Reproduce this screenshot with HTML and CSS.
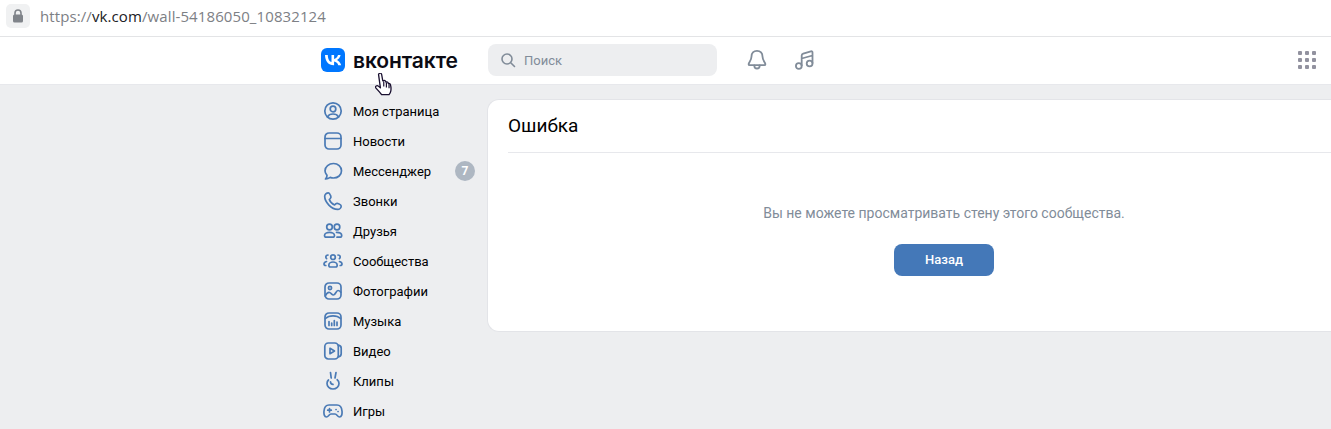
FILE: index.html
```html
<!DOCTYPE html>
<html lang="ru">

<head>
    <meta charset="UTF-8">
    <title>Ошибка</title>
    <link rel="stylesheet" href="styles.css">
</head>

<body>
    <div class="urlbar">
        <div class="lock">
            <svg width="12" height="14" viewBox="0 0 12 14"><path d="M3 6V4a3 3 0 0 1 6 0v2" fill="none" stroke="#80848a" stroke-width="1.6"/><rect x="1" y="5.5" width="10" height="8" rx="1.5" fill="#80848a"/></svg>
        </div>
        <div class="url">https://<b>vk.com</b>/wall-54186050_10832124</div>
    </div>

    <header class="top">
        <div class="top-inner">
            <div class="logo">
                <svg width="24" height="24" viewBox="0 0 24 24"><rect width="24" height="24" rx="6" fill="#07f"/><path d="M12.8 17.2C7.3 17.2 4.2 13.4 4 7h2.8c.1 4.700 2.100 6.700 3.700 7.100V7h2.600v4c1.600-.2 3.300-2 3.900-4h2.600c-.4 2.500-2.300 4.300-3.600 5.100 1.300.6 3.400 2.200 4.200 5.100h-2.900c-.6-1.900-2.200-3.400-4.200-3.600v3.600z" fill="#fff"/></svg>
                <span class="logo-text">вконтакте</span>
            </div>
            <div class="search">
                <svg width="16" height="16" viewBox="0 0 16 16" fill="none" stroke="#818c99" stroke-width="1.6" stroke-linecap="round"><circle cx="7" cy="7" r="5"/><path d="M11 11l3.500 3.500"/></svg>
                <span>Поиск</span>
            </div>
            <div class="top-icon bell">
                <svg width="24" height="24" viewBox="0 0 24 24" fill="none" stroke="#818c99" stroke-width="1.800" stroke-linejoin="round" stroke-linecap="round"><path d="M12 2.800c-3.500 0-5.500 2.500-5.500 5.700 0 4-2.900 6-2.900 7.700 0 .7.500 1 1.200 1h14.400c.7 0 1.200-.3 1.200-1 0-1.700-2.900-3.700-2.900-7.700 0-3.200-2-5.700-5.500-5.700z"/><path d="M9.300 17.400c0 1.900 1.100 3.100 2.700 3.100s2.700-1.200 2.700-3.100"/></svg>
            </div>
            <div class="top-icon">
                <svg width="24" height="24" viewBox="0 0 24 24" fill="none" stroke="#818c99" stroke-width="1.800" stroke-linejoin="round"><circle cx="5.800" cy="18" r="2.900"/><circle cx="16.600" cy="15.500" r="2.900"/><path d="M8.700 18V7.500c0-1 .5-1.600 1.500-1.900l7.700-2.300c1-.2 1.600.3 1.600 1.300v10.900M8.700 10.500l10.800-3"/></svg>
            </div>
            <div class="apps">
                <i></i><i></i><i></i><i></i><i></i><i></i><i></i><i></i><i></i>
            </div>
        </div>
    </header>

    <div class="page">
        <nav class="side">
            <a class="side-item">
                <svg viewBox="0 0 20 20"><circle cx="10" cy="10" r="8.200"/><circle cx="10" cy="8" r="2.800"/><path d="M4.600 15.800c1-2 3-2.800 5.400-2.800s4.400.8 5.400 2.800"/></svg>
                <span>Моя страница</span>
            </a>
            <a class="side-item">
                <svg viewBox="0 0 20 20"><rect x="2" y="2" width="16" height="16" rx="4"/><path d="M2 7.500h16"/></svg>
                <span>Новости</span>
            </a>
            <a class="side-item">
                <svg viewBox="0 0 20 20"><path d="M10.500 2.500c4.500 0 8 3 8 7.300s-3.500 7.200-8 7.200c-1.200 0-2.300-.2-3.300-.6-1 .7-3 1.700-4.700 1.600.8-.9 1.500-2.300 1.500-3.600C2.800 13 2 11.500 2 9.800c0-4.300 4-7.300 8.500-7.300z"/></svg>
                <span>Мессенджер</span>
                <em class="badge">7</em>
            </a>
            <a class="side-item">
                <svg viewBox="0 0 20 20"><path d="M5.500 1.800c1 0 1.700 2 2.300 3.300.4 1 .1 1.700-.5 2.400l-1 1c.8 2.300 2.900 4.500 5.300 5.500l1.100-1.100c.7-.6 1.300-.8 2.200-.4 1.400.7 3.300 1.400 3.300 2.400 0 2-1.800 3.400-3.500 3.400C8.500 18.300 1.700 11.300 1.700 5.300c0-1.800 1.700-3.500 3.800-3.500z"/></svg>
                <span>Звонки</span>
            </a>
            <a class="side-item">
                <svg viewBox="0 0 20 20"><circle cx="6.500" cy="6" r="2.800"/><circle cx="14" cy="6" r="2.800"/><path d="M1.500 14.500c0-2 2.500-3.200 5-3.200s5 1.200 5 3.200c0 1.300-.8 1.700-2 1.700h-6c-1.200 0-2-.4-2-1.700zM13.500 11.300c2.800 0 5.200 1.200 5.200 3.200 0 1.200-.7 1.700-1.900 1.700h-2.800"/></svg>
                <span>Друзья</span>
            </a>
            <a class="side-item">
                <svg viewBox="0 0 20 20"><circle cx="10" cy="6.200" r="2.300"/><path d="M5.800 14.300c0-2 2-3.300 4.200-3.300s4.200 1.300 4.200 3.300c0 1.200-.7 1.700-1.700 1.700H7.500c-1 0-1.700-.5-1.700-1.700zM5 4c-1.400 0-2.200 1-2.200 2.100 0 .7.300 1.200.8 1.600M15 4c1.400 0 2.200 1 2.200 2.100 0 .7-.3 1.200-.8 1.600M3.500 10.500c-1.300.4-2.500 1.300-2.500 2.500 0 1 .7 1.500 1.800 1.500M16.500 10.500c1.300.4 2.500 1.300 2.500 2.500 0 1-.7 1.500-1.800 1.500"/></svg>
                <span>Сообщества</span>
            </a>
            <a class="side-item">
                <svg viewBox="0 0 20 20"><rect x="2" y="2" width="16" height="16" rx="4"/><circle cx="7" cy="7" r="1.600"/><path d="M2.200 15c1.500-2.800 3-3.800 4.300-3.500 1.800.4 2.300 2.500 4 2.500 2 0 2.500-4.500 4.500-4.500 1 0 2 .7 2.800 1.700"/></svg>
                <span>Фотографии</span>
            </a>
            <a class="side-item">
                <svg viewBox="0 0 20 20"><rect x="2" y="2" width="16" height="16" rx="4"/><path d="M2.500 7.500C4.500 5.500 7 4.800 10 4.800s5.500.7 7.500 2.700M6 10.500v4M8.700 12v2.500M11.300 9.500v5M14 11v3.500"/></svg>
                <span>Музыка</span>
            </a>
            <a class="side-item">
                <svg viewBox="0 0 20 20"><rect x="1.800" y="2" width="13.500" height="16" rx="3.500"/><path d="M15.300 4.200c1.800.2 2.900 1.300 2.900 3v5.600c0 1.700-1.100 2.800-2.900 3M7 7.300v5.400l4.500-2.700z"/></svg>
                <span>Видео</span>
            </a>
            <a class="side-item">
                <svg viewBox="0 0 20 20"><path d="M7.500 1.500l.7 5.500M13 1.500L12 7M5.500 9c-1 .9-1.500 2.200-1.500 3.500 0 3 2.600 5.500 6 5.500s6-2.500 6-5.500c0-1.600-.7-3-1.800-3.800M7.500 10.800c0 1.500 1.100 2.600 2.500 2.600"/></svg>
                <span>Клипы</span>
            </a>
            <a class="side-item">
                <svg viewBox="0 0 20 20"><path d="M6 4h8c3 0 4.700 2.500 5 6 .3 3-.3 6-2.500 6-2 0-2.500-3-4.500-3H8c-2 0-2.500 3-4.500 3C1.300 16 .7 13 1 10c.3-3.500 2-6 5-6zM6.500 7.500v3.500M4.700 9.200h3.600M13 8.500h.1M15 10.500h.1"/></svg>
                <span>Игры</span>
            </a>
        </nav>

        <main class="card">
            <h2 class="card-title">Ошибка</h2>
            <div class="card-body">
                <p class="msg">Вы не можете просматривать стену этого сообщества.</p>
                <button class="btn">Назад</button>
            </div>
        </main>
    </div>

    <svg class="cursor" width="18" height="24" viewBox="1.500 1 15 23" preserveAspectRatio="none"><path d="M5 1.500c.8-.6 1.800-.2 2 .7l1 6.300.5-.1.300-.2c.6-.3 1.300 0 1.500.6l.3 1 .3-.2c.7-.2 1.300.1 1.500.8l.2.700c.7-.3 1.500 0 1.700.8.600 2.400.7 4.300.4 6.200-.3 1.800-1 3-1.500 3.600H7c-1-1.500-2.700-3.800-4.700-6.200-.6-.8-.5-1.600.2-2.100.6-.4 1.400-.2 2 .4l1.500 1.500L4.500 2.800c-.1-.5.100-1 .5-1.300z" fill="#fff" stroke="#1a1030" stroke-width="1.100" stroke-linejoin="round"/><path d="M8.800 9v5M11 10.200V15M13.200 11.500v4" stroke="#1a1030" stroke-width="1" fill="none"/></svg>
</body>

</html>
```

FILE: styles.css
```css
* {
    box-sizing: border-box;
    padding: 0;
    margin: 0;
}

html,
body {
    width: 100%;
    height: 100%;
    overflow: hidden;
}

body {
    background: #edeef0;
    font-family: Roboto, "Liberation Sans", sans-serif;
    font-size: 13px;
    color: #000;
}

/* browser address bar */
.urlbar {
    display: flex;
    align-items: center;
    height: 37px;
    padding-left: 6px;
    padding-bottom: 4px;
    background: #fff;
    border-bottom: 1px solid #e3e4e6;
}

.lock {
    display: flex;
    justify-content: center;
    align-items: center;
    width: 24px;
    height: 24px;
    margin-right: 10px;
    background: #f0f1f2;
    border-radius: 5px;
}

.url {
    font-family: "Open Sans", sans-serif;
    font-size: 15px;
    letter-spacing: 0.1px;
    color: #7d8085;
}

.url b {
    font-weight: 400;
    color: #202124;
}

/* vk header */
.top {
    height: 48px;
    background: #fff;
    border-bottom: 1px solid #e7e8ec;
}

.top-inner {
    display: flex;
    align-items: center;
    height: 46px;
    padding-left: 321px;
    padding-right: 15px;
}

.logo {
    display: flex;
    align-items: center;
    width: 167px;
}

.logo-text {
    margin-left: 8px;
    font-family: Inter, sans-serif;
    font-size: 21px;
    font-weight: 600;
    letter-spacing: -0.1px;
    color: #0b0b14;
}

.search {
    display: flex;
    align-items: center;
    width: 229px;
    height: 32px;
    padding-left: 12px;
    background: #edeef0;
    border-radius: 8px;
    color: #818c99;
}

.search span {
    margin-left: 8px;
}

.top-icon {
    display: flex;
    margin-left: 24px;
    width: 24px;
}

.bell {
    margin-left: 28px;
}

.apps {
    display: grid;
    grid-template-columns: repeat(3, 4px);
    gap: 3px;
    margin-left: auto;
}

.apps i {
    height: 4px;
    background: #92929f;
    border-radius: 1px;
}

/* page */
.page {
    display: flex;
    align-items: flex-start;
    padding-left: 320px;
}

.side {
    flex: none;
    width: 167px;
    padding-top: 11px;
}

.side-item {
    display: flex;
    align-items: center;
    height: 30px;
    padding-left: 3px;
    padding-right: 12px;
    color: #000;
    font-size: 13px;
}

.side-item svg {
    width: 20px;
    height: 20px;
    margin-right: 10px;
    fill: none;
    stroke: #4a7ab5;
    stroke-width: 1.700;
    stroke-linecap: round;
    stroke-linejoin: round;
    flex-shrink: 0;
}

.badge {
    display: flex;
    justify-content: center;
    align-items: center;
    width: 20px;
    height: 20px;
    margin-left: auto;
    background: #aeb7c2;
    border-radius: 50%;
    font-style: normal;
    font-size: 12px;
    font-weight: 700;
    color: #fff;
}

/* touches the right edge of the window, no right border there */
.card {
    flex: 1;
    height: 233px;
    margin-top: 14px;
    padding-left: 20px;
    background: #fff;
    border: 1px solid #e3e4e8;
    border-right: 0;
    border-radius: 12px 0 0 12px;
}

.card-title {
    height: 53px;
    padding-top: 15px;
    font-size: 19px;
    font-weight: 400;
    line-height: 22px;
    border-bottom: 1px solid #e7e8ec;
}

.card-body {
    display: flex;
    flex-direction: column;
    align-items: center;
    padding-top: 52px;
    padding-left: 49px;
}

.msg {
    color: #818c99;
    font-size: 14px;
    line-height: 16px;
}

.btn {
    width: 100px;
    height: 32px;
    margin-top: 23px;
    padding-bottom: 2px;
    background: #4478b8;
    border: 0;
    border-radius: 8px;
    color: #fff;
    font-family: inherit;
    font-size: 13px;
    font-weight: 500;
}

/* mouse pointer in the shot */
.cursor {
    position: absolute;
    left: 375px;
    top: 73px;
}
```
